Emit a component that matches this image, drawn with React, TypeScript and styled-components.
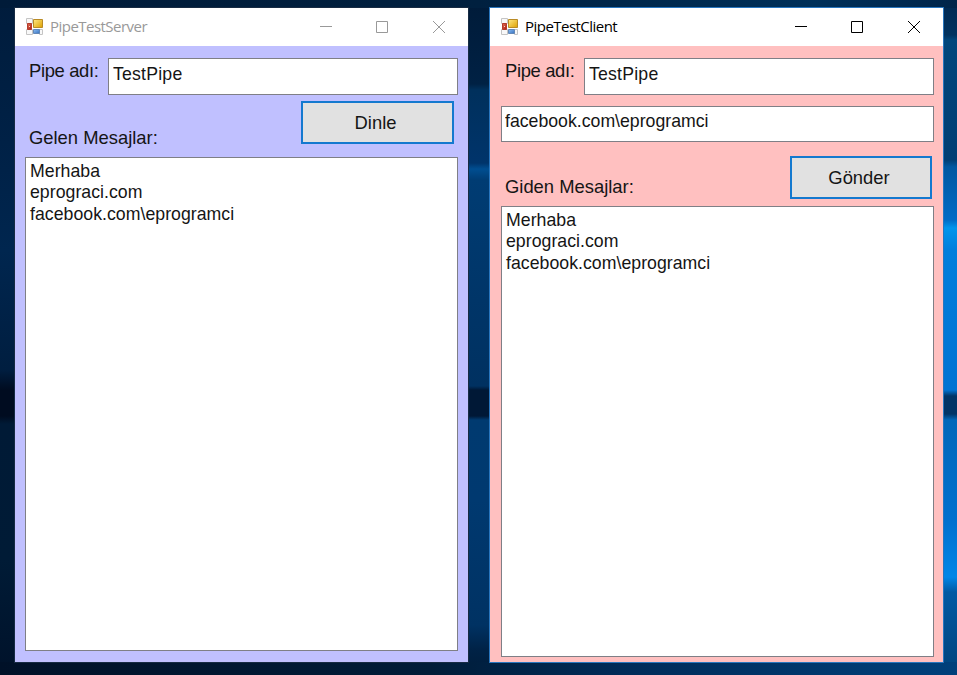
import React from "react";
import styled, { createGlobalStyle } from "styled-components";

const GlobalStyle = createGlobalStyle`
  * { box-sizing: border-box; }
  body { margin: 0; overflow: hidden; }
`;

const Desktop = styled.main`
  display: flex;
  gap: 20px;
  width: 957px;
  height: 675px;
  padding: 7px 0 0 14px;
  font-family: "Liberation Sans", Arial, sans-serif;
  color: #151515;
  background:
    linear-gradient(90deg, #001b39, #00203f 50%, #003059 85%, #00254a) 0 0 / 957px 8px no-repeat,
    linear-gradient(90deg, #001128, #001c38 45%, #002b58 65%, #00407b) 0 662px / 957px 13px no-repeat,
    linear-gradient(#001c3c, #002248 170px, #00264f 250px, #001e40 370px, #000c20 390px, #000c20 416px, #001a36 424px, #001b36 560px, #00122a) 0 0 / 16px 100% no-repeat,
    linear-gradient(#001b39, #002144 84px, #00305c 90px, #00346b 163px, #004e91 169px, #003c73 180px, #003568 300px, #003161 386px, #001836 390px, #001836 416px, #003a70 420px, #003970 500px, #003263 625px, #002246 650px, #001c39) 466px 0 / 25px 100% no-repeat,
    linear-gradient(#002851, #003260 35px, #00467c 40px, #003e74 160px, #0057a1 167px, #006bc6 220px, #0095ec 228px, #007edc 250px, #0073d3 390px, #003467 396px, #003467 414px, #0067ba 420px, #0070ce 520px, #0086e7 577px, #0059a4 592px, #00437b) 943px 0 / 14px 100% no-repeat,
    #001e40;
`;

const Window = styled.section<{ $active?: boolean }>`
  display: flex;
  flex-direction: column;
  flex: none;
  width: 455px;
  height: 656px;
  border: 1px solid ${(p) => (p.$active ? "#2875bd" : "#172b43")};
`;

const TitleBar = styled.header<{ $active?: boolean }>`
  display: flex;
  align-items: center;
  height: 38px;
  flex: none;
  padding: 0 1px 0 11px;
  background: #fff;
  color: ${(p) => (p.$active ? "#000" : "#999")};
`;

const Title = styled.h1`
  flex: 1;
  margin: -2px 0 0 6px;
  font: 400 15px/24px "Open Sans", "Noto Sans", sans-serif;
  letter-spacing: -0.53px;
`;

const WindowControls = styled.div`
  display: flex;
  margin-top: -1px;
  svg { display: block; }
`;

const ControlButton = styled.button`
  display: grid;
  place-items: center;
  width: 56.5px;
  height: 38px;
  padding: 0;
  border: 0;
  background: transparent;
  color: inherit;
`;

const Form = styled.div<{ $active?: boolean }>`
  display: flex;
  flex-direction: column;
  flex: 1;
  padding: ${(p) => (p.$active ? "12px 9px 0 11px" : "12px 10px 0")};
  background: ${(p) => (p.$active ? "#ffc0c0" : "#c0c0ff")};
`;

const NameRow = styled.div`
  display: flex;
  justify-content: space-between;
  height: 37px;
`;

const Label = styled.label`
  padding-left: 4px;
  font-size: 18.4px;
  line-height: 25px;
  white-space: nowrap;
`;

const NameLabel = styled(Label)`
  letter-spacing: -0.35px;
`;

const TextBox = styled.input`
  display: block;
  width: 350px;
  height: 37px;
  padding: 0 4px 4px 4px;
  border: 1px solid #7f7f86;
  border-radius: 0;
  outline: 0;
  background: #fff;
  color: #151515;
  font: 17.7px "Liberation Sans", Arial, sans-serif;
  letter-spacing: 0.2px;
`;

const MessageBox = styled(TextBox)`
  width: 433px;
  height: 36px;
  margin-top: 11px;
  padding: 0 4px 5px 3px;
  letter-spacing: 0;
`;

const ActionRow = styled.div<{ $top: number; $right: number; $height: number }>`
  display: flex;
  justify-content: space-between;
  align-items: flex-start;
  height: ${(p) => p.$height}px;
  padding: ${(p) => p.$top}px ${(p) => p.$right}px 0 0;
  ${Label} { align-self: flex-end; margin-bottom: 7px; }
`;

const ActionButton = styled.button<{ $width: number }>`
  width: ${(p) => p.$width}px;
  height: 43px;
  padding: 1px 4px 0 0;
  border: 2px solid #1479cf;
  border-radius: 0;
  background: #e1e1e1;
  color: #151515;
  font: 18.4px "Liberation Sans", Arial, sans-serif;
`;

const MessageList = styled.ul<{ $height: number }>`
  width: 433px;
  height: ${(p) => p.$height}px;
  margin: 0;
  padding: 3px 4px;
  list-style: none;
  border: 1px solid #7f7f86;
  background: #fff;
  font-size: 17.7px;
  line-height: 21.3px;
  letter-spacing: 0.03px;
`;

const messages = ["Merhaba", "eprograci.com", "facebook.com\\eprogramci"];

function FormIcon() {
  return (
    <svg width="18" height="18" viewBox="0 0 18 18" aria-hidden="true">
      <defs>
        <linearGradient id="gold" x2="1" y2="1"><stop stopColor="#ffe884" /><stop offset="1" stopColor="#dda000" /></linearGradient>
        <linearGradient id="red" x2="1" y2="1"><stop stopColor="#df7459" /><stop offset="1" stopColor="#ac170e" /></linearGradient>
        <linearGradient id="blue" x2="1" y2="1"><stop stopColor="#8bbcf2" /><stop offset="1" stopColor="#3571bf" /></linearGradient>
      </defs>
      <path d="M.5.5h6v5h-6zM.5 11.5h6v5h-6zM13.5 11.5h3v5h-3z" fill="#f8f8f8" stroke="#c4c4c4" />
      <path d="M7.5 1.5h9v8h-9z" fill="url(#gold)" stroke="#b98b26" />
      <path d="M1.5 5.5h4v6h-4z" fill="url(#red)" stroke="#b53a2b" />
      <path d="M7.5 11.5h6v4h-6z" fill="url(#blue)" stroke="#6388b7" />
      <path d="M3 8h1v1H3z" fill="#ffd1bd" />
    </svg>
  );
}

function AppWindow({ title, active, children }: { title: string; active?: boolean; children: React.ReactNode }) {
  return (
    <Window $active={active}>
      <TitleBar $active={active}>
        <FormIcon />
        <Title>{title}</Title>
        <WindowControls>
          <ControlButton aria-label="Minimize"><svg width="12" height="13"><path d="M0 6.5h12" stroke="currentColor" /></svg></ControlButton>
          <ControlButton aria-label="Maximize"><svg width="12" height="12"><path d="M.5.5h11v11H.5z" fill="none" stroke="currentColor" /></svg></ControlButton>
          <ControlButton aria-label="Close"><svg width="12" height="12"><path d="m0 0 12 12M12 0 0 12" stroke="currentColor" /></svg></ControlButton>
        </WindowControls>
      </TitleBar>
      <Form $active={active}>{children}</Form>
    </Window>
  );
}

function Messages({ height }: { height: number }) {
  return <MessageList $height={height}>{messages.map((message) => <li key={message}>{message}</li>)}</MessageList>;
}

export default function App() {
  return (
    <>
      <GlobalStyle />
      <Desktop>
        <AppWindow title="PipeTestServer">
          <NameRow><NameLabel>Pipe adı:</NameLabel><TextBox defaultValue="TestPipe" /></NameRow>
          <ActionRow $top={6} $right={4} $height={62}>
            <Label>Gelen Mesajlar:</Label><ActionButton $width={153}>Dinle</ActionButton>
          </ActionRow>
          <Messages height={494} />
        </AppWindow>
        <AppWindow title="PipeTestClient" active>
          <NameRow><NameLabel>Pipe adı:</NameLabel><TextBox defaultValue="TestPipe" /></NameRow>
          <MessageBox defaultValue={"facebook.com\\eprogramci"} />
          <ActionRow $top={14} $right={2} $height={64}>
            <Label>Giden Mesajlar:</Label><ActionButton $width={142}>Gönder</ActionButton>
          </ActionRow>
          <Messages height={451} />
        </AppWindow>
      </Desktop>
    </>
  );
}
